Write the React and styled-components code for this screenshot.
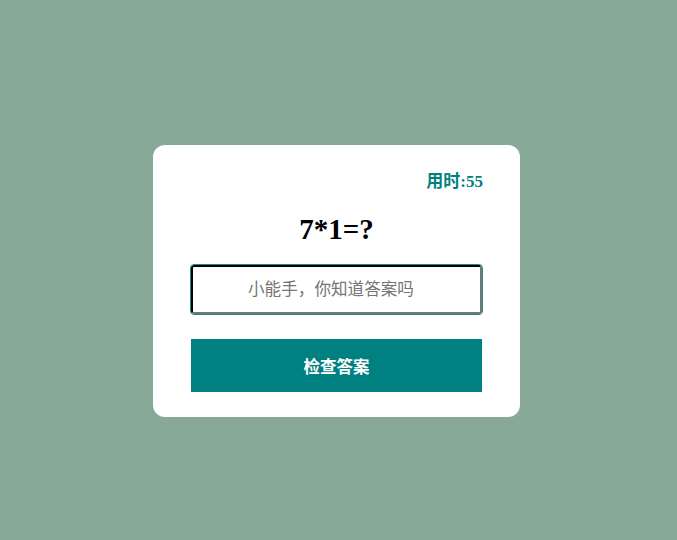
import React from "react";
import styled, { createGlobalStyle } from "styled-components";

const Global = createGlobalStyle`
  html, body { margin: 0; padding: 0; }
  body { background: #88a998; font-family: "Liberation Serif", "Noto Sans CJK SC", serif; }
`;

const Page = styled.div`
  box-sizing: border-box;
  height: 540px;
  padding: 22px 4px 0 0;
  display: flex;
  align-items: center;
  justify-content: center;
`;

const Card = styled.div`
  box-sizing: border-box;
  width: 367px;
  background: #fff;
  border-radius: 12px;
  padding: 28px 38px 25px;
  display: flex;
  flex-direction: column;
`;

const Timer = styled.div`
  text-align: right;
  color: #008080;
  font-weight: bold;
  font-size: 17px;
  line-height: 18px;
  margin-right: -1px;
`;

const Question = styled.h2`
  margin: 22px 0 0;
  text-align: center;
  font-size: 29px;
  line-height: 32px;
  font-weight: bold;
  color: #000;
`;

const Answer = styled.input`
  box-sizing: border-box;
  margin: 20px 0 0;
  width: 291px;
  height: 49px;
  padding: 0 11px 3px 0;
  border: 2px inset #767676;
  border-top-color: #1a1a1a;
  border-left-color: #1a1a1a;
  border-radius: 3px;
  outline: 1px solid #1f8a86;
  text-align: center;
  font-size: 16.6px;
  font-family: "Noto Sans CJK SC", sans-serif;
  color: #333;
  &::placeholder { color: #757575; }
`;

const CheckButton = styled.button`
  margin-top: 25px;
  height: 53px;
  border: none;
  background: #008080;
  color: #fff;
  font-size: 16.5px;
  font-weight: bold;
  font-family: "Noto Sans CJK SC", sans-serif;
`;

export default function App() {
  return (
    <>
      <Global />
      <Page>
        <Card>
          <Timer>用时:55</Timer>
          <Question>7*1=?</Question>
          <Answer placeholder="小能手，你知道答案吗" />
          <CheckButton>检查答案</CheckButton>
        </Card>
      </Page>
    </>
  );
}
